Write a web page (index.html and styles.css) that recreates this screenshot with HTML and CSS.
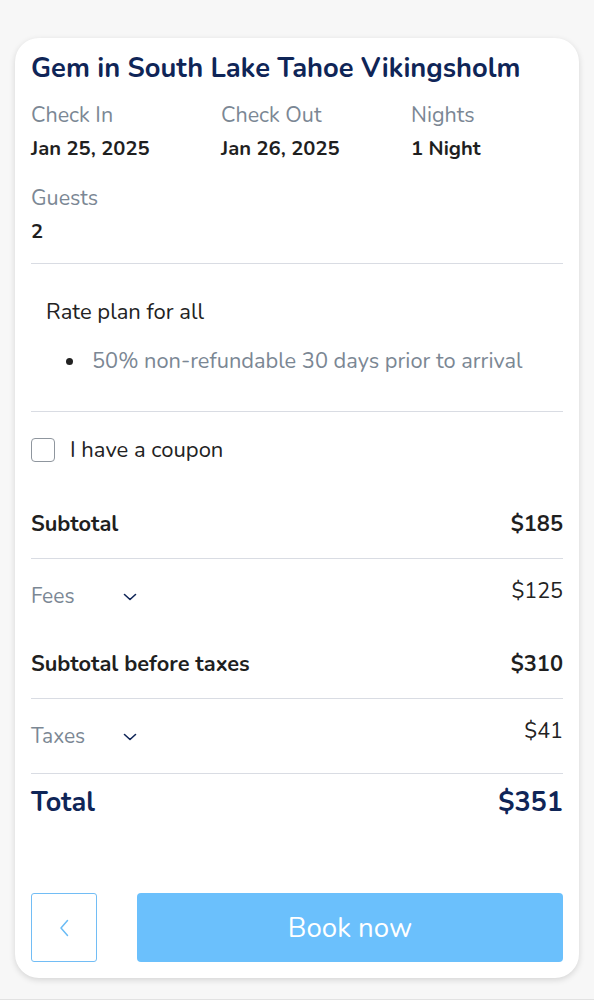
FILE: index.html
```html
<!DOCTYPE html>
<html lang="en">
<head>
<meta charset="utf-8">
<title>Booking summary</title>
<link rel="stylesheet" href="styles.css">
</head>
<body>
<div class="card">
  <h1 class="title">Gem in South Lake Tahoe Vikingsholm</h1>
  <div class="info">
    <div class="cell"><div class="label">Check In</div><div class="value">Jan 25, 2025</div></div>
    <div class="cell"><div class="label">Check Out</div><div class="value">Jan 26, 2025</div></div>
    <div class="cell"><div class="label">Nights</div><div class="value">1 Night</div></div>
    <div class="cell"><div class="label">Guests</div><div class="value">2</div></div>
  </div>
  <div class="rate">
    <div class="rate-title">Rate plan for all</div>
    <ul class="rate-list">
      <li>50% non-refundable 30 days prior to arrival</li>
    </ul>
  </div>
  <label class="coupon"><span class="checkbox"></span><span>I have a coupon</span></label>
  <div class="row strong bordered"><span>Subtotal</span><span>$185</span></div>
  <div class="row toggle"><span class="toggle-label">Fees <svg class="chev" viewBox="0 0 14 8" width="14" height="8"><path d="M1.5 1.5 L7 6.5 L12.5 1.5" fill="none" stroke="#0f2557" stroke-width="1.6" stroke-linecap="round" stroke-linejoin="round"/></svg></span><span class="amount">$125</span></div>
  <div class="row strong bordered"><span>Subtotal before taxes</span><span>$310</span></div>
  <div class="row toggle bordered"><span class="toggle-label">Taxes <svg class="chev" viewBox="0 0 14 8" width="14" height="8"><path d="M1.5 1.5 L7 6.5 L12.5 1.5" fill="none" stroke="#0f2557" stroke-width="1.6" stroke-linecap="round" stroke-linejoin="round"/></svg></span><span class="amount">$41</span></div>
  <div class="row total"><span>Total</span><span>$351</span></div>
  <div class="actions">
    <button class="back" type="button"><svg viewBox="0 0 10 18" width="10" height="18"><path d="M8.5 1.5 L2 9 L8.5 16.5" fill="none" stroke="#6bbcf5" stroke-width="1.5" stroke-linecap="round" stroke-linejoin="round"/></svg></button>
    <button class="book" type="button">Book now</button>
  </div>
</div>
</body>
</html>
```
FILE: styles.css
```css
* { box-sizing: border-box; }
html, body { margin: 0; padding: 0; }
body {
  background: #f7f7f7;
  font-family: "Nunito", "Lato", "Open Sans", sans-serif;
  color: #222;
  height: 1000px;
  border-bottom: 1px solid #e2e2e2;
}
.card {
  margin: 38px 15px 0;
  height: 940px;
  background: #fff;
  border-radius: 24px;
  box-shadow: 0 2px 6px rgba(0,0,0,0.14);
  padding: 14px 16px 16px;
  display: flex;
  flex-direction: column;
}
.title {
  margin: 0;
  font-size: 27.3px;
  line-height: 32px;
  font-weight: 700;
  color: #0f2557;
}
.info {
  margin-top: 17px;
  display: grid;
  grid-template-columns: 190px 190px 1fr;
  row-gap: 21px;
  padding-bottom: 17px;
  border-bottom: 1px solid #d9dce3;
}
.label { font-size: 21.5px; line-height: 28px; color: #7b8794; }
.value { font-size: 20.2px; line-height: 28px; font-weight: 700; margin-top: 6px; color: #1f1f1f; }
.rate {
  padding: 34px 0 36px 15px;
  border-bottom: 1px solid #d9dce3;
}
.rate-title { font-size: 22px; line-height: 28px; color: #222; }
.rate-list {
  margin: 21px 0 0;
  padding-left: 20px;
  list-style: none;
  font-size: 21.8px;
  line-height: 28px;
  color: #7b8794;
}
.rate-list li {
  display: flex;
  align-items: center;
  gap: 19px;
}
.rate-list li::before {
  content: "";
  width: 7px;
  height: 7px;
  border-radius: 50%;
  background: #222;
  flex: none;
}
.coupon {
  display: flex;
  align-items: center;
  gap: 15px;
  margin-top: 26px;
  font-size: 22px;
  line-height: 24px;
  color: #222;
}
.checkbox {
  width: 24px;
  height: 24px;
  border: 1.5px solid #8f969e;
  border-radius: 4px;
}
.row {
  display: flex;
  justify-content: space-between;
  align-items: flex-start;
  font-size: 22px;
  line-height: 28px;
}
.strong { font-weight: 700; padding: 20px 0; color: #1f1f1f; font-size: 21.8px; }
.coupon + .row { margin-top: 28px; }
.bordered { border-bottom: 1px solid #d9dce3; }
.toggle { padding: 18px 0 15px; font-size: 21.5px; }
.toggle.bordered { padding-bottom: 18px; }
.toggle-label {
  display: flex;
  align-items: center;
  font-size: 21px;
  line-height: 38px;
  color: #7b8794;
  width: 106px;
  justify-content: space-between;
}
.chev { margin-top: 2px; }
.amount { color: #222; }
.total {
  padding-top: 13px;
  font-size: 27px;
  line-height: 32px;
  font-weight: 700;
  color: #0f2557;
}
.actions {
  margin-top: auto;
  display: flex;
  gap: 40px;
  height: 69px;
}
.back {
  width: 66px;
  flex: none;
  background: #fff;
  border: 1.5px solid #72bdf5;
  border-radius: 3px;
  display: flex;
  align-items: center;
  justify-content: center;
  padding: 0;
}
.book {
  flex: 1;
  background: #6bc0fc;
  color: #fff;
  border: none;
  border-radius: 4px;
  font-family: inherit;
  font-size: 27.6px;
}
```
